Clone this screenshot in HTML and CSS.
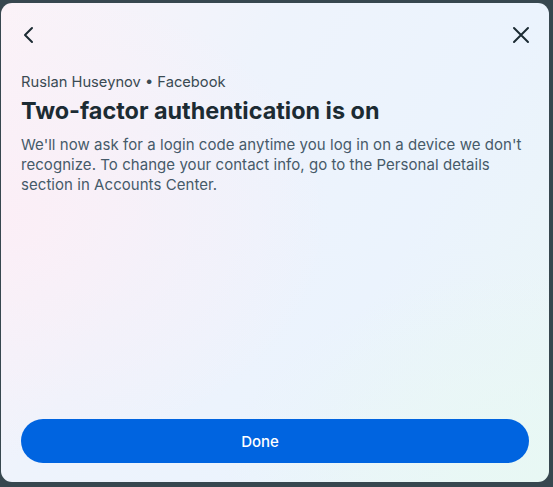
FILE: index.html
```html
<!DOCTYPE html>
<html>
<head>
<meta charset="utf-8">
<link rel="stylesheet" href="styles.css">
</head>
<body>
<div class="dialog">
  <div class="topbar">
    <button class="icon-btn" aria-label="Back">
      <svg width="24" height="24" viewBox="0 0 24 24"><path d="M15 5 L8 12 L15 19" fill="none" stroke="#1c2b33" stroke-width="2" stroke-linecap="round" stroke-linejoin="round"/></svg>
    </button>
    <button class="icon-btn" aria-label="Close">
      <svg width="24" height="24" viewBox="0 0 24 24"><path d="M5 5 L19 19 M19 5 L5 19" fill="none" stroke="#1c2b33" stroke-width="2" stroke-linecap="round"/></svg>
    </button>
  </div>
  <div class="content">
    <div class="account">Ruslan Huseynov • Facebook</div>
    <h1 class="title">Two-factor authentication is on</h1>
    <p class="desc">We'll now ask for a login code anytime you log in on a device we don't recognize. To change your contact info, go to the Personal details section in Accounts Center.</p>
  </div>
  <div class="footer">
    <button class="done">Done</button>
  </div>
</div>
</body>
</html>
```
FILE: styles.css
```css
html, body {
  margin: 0;
  padding: 0;
  background: #37474f;
  width: 553px;
  height: 487px;
  overflow: hidden;
}
body {
  padding: 3px 4px 5px 1px;
  box-sizing: border-box;
  font-family: "Inter", "Roboto", sans-serif;
}
.dialog {
  height: 479px;
  border-radius: 11px;
  background:
    radial-gradient(ellipse 60% 50% at 0% 45%, rgba(252, 238, 246, 0.9), rgba(252, 238, 246, 0) 100%),
    radial-gradient(ellipse 60% 45% at 100% 100%, rgba(232, 248, 244, 1), rgba(232, 248, 244, 0) 100%),
    linear-gradient(120deg, #fbf3f8 0%, #eef3fc 35%, #ebf3fd 65%, #eaf6f6 100%);
  display: flex;
  flex-direction: column;
  box-sizing: border-box;
}
.topbar {
  display: flex;
  justify-content: space-between;
  padding: 20px 16px 0 16px;
}
.icon-btn {
  background: none;
  border: 0;
  padding: 0;
  width: 24px;
  height: 24px;
  display: flex;
}
.content {
  padding: 25px 20px 0 20px;
  flex: 1;
}
.account {
  font-size: 14.7px;
  line-height: 20px;
  color: #3a4a53;
}
.title {
  margin: 5px 0 0 0;
  font-size: 23.4px;
  line-height: 28px;
  font-weight: 700;
  color: #1c2b33;
  letter-spacing: 0;
}
.desc {
  margin: 10px 0 0 0;
  font-size: 15px;
  line-height: 20px;
  color: #465a69;
  letter-spacing: 0.05px;
}
.footer {
  padding: 0 20px 19px 20px;
}
.done {
  width: 100%;
  height: 44px;
  border: 0;
  border-radius: 22px;
  background: #0064e0;
  color: #fff;
  font-family: "Inter", "Roboto", sans-serif;
  font-size: 15px;
  font-weight: 500;
  padding: 0 30px 0 0;
}
```
